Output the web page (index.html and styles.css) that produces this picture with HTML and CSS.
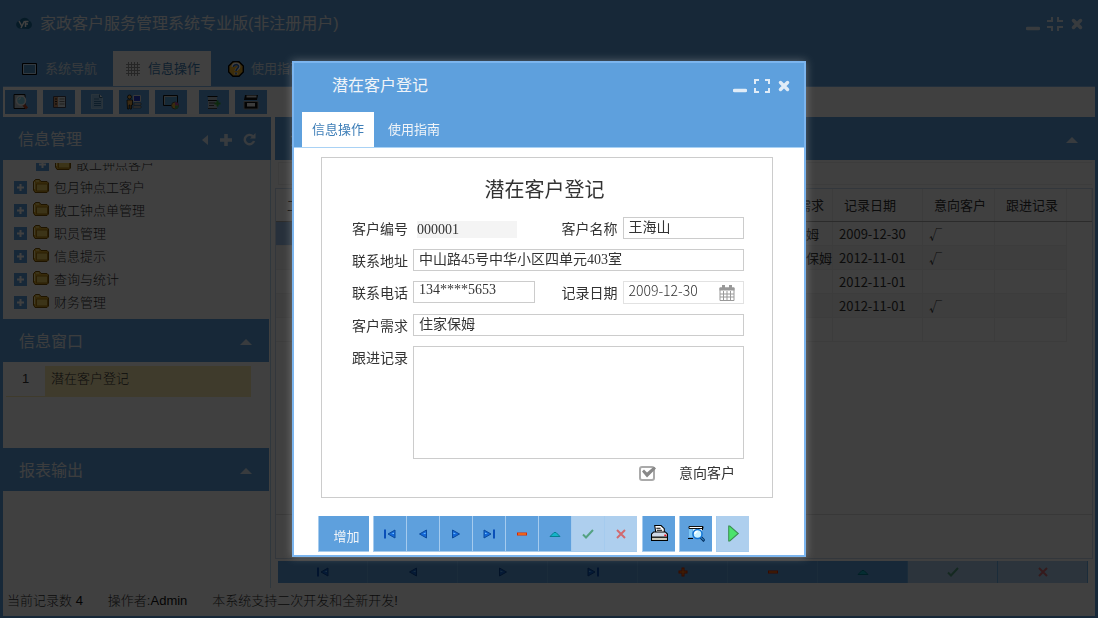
FILE: index.html
```html
<!DOCTYPE html>
<html lang="zh-CN">
  <head>
    <meta charset="utf-8">
    <title>家政客户服务管理系统专业版</title>
    <link rel="stylesheet" href="styles.css">
  </head>
  <body>
    <svg class="sprite" aria-hidden="true">
      <symbol id="i-first" viewBox="0 0 12 10"><path d="M1 .5v9" stroke="#0a4fb8" stroke-width="2"/><path d="M11 1v8L4 5z" fill="#1468d8" stroke="#0a4a9c"/><path d="M10 3.500L7.500 5H10z" fill="#6fc0ff"/></symbol>
      <symbol id="i-prev" viewBox="0 0 12 10"><path d="M9.500 1v8L2.500 5z" fill="#1468d8" stroke="#0a4a9c"/><path d="M8.500 3.500L6 5h2.500z" fill="#6fc0ff"/></symbol>
      <symbol id="i-next" viewBox="0 0 12 10"><path d="M2.500 1v8L9.500 5z" fill="#1468d8" stroke="#0a4a9c"/><path d="M3.500 3.500L6 5H3.500z" fill="#6fc0ff"/></symbol>
      <symbol id="i-last" viewBox="0 0 12 10"><path d="M11 .5v9" stroke="#0a4fb8" stroke-width="2"/><path d="M1 1v8L8 5z" fill="#1468d8" stroke="#0a4a9c"/><path d="M2 3.500L4.500 5H2z" fill="#6fc0ff"/></symbol>
      <symbol id="i-plus" viewBox="0 0 12 10"><path d="M6 .5v9M1.500 5h9" stroke="#d42a00" stroke-width="3"/><path d="M6 1.500v7M2.500 5h7" stroke="#ff8a1c"/></symbol>
      <symbol id="i-minus" viewBox="0 0 12 10"><path d="M1 5h10" stroke="#dc2800" stroke-width="3"/><path d="M2 5h8" stroke="#ff9a2c"/></symbol>
      <symbol id="i-up" viewBox="0 0 12 10"><path d="M1 7.500L5 3.500h2l4 4z" fill="#14b4c8" stroke="#067f92"/></symbol>
      <symbol id="i-ok" viewBox="0 0 12 10"><path d="M1 5.500l3 3L11 1" fill="none" stroke="#2f8f55" stroke-width="2"/></symbol>
      <symbol id="i-no" viewBox="0 0 12 10"><path d="M2 1l8 8M10 1L2 9" fill="none" stroke="#e0403c" stroke-width="2"/></symbol>
      <symbol id="i-caret" viewBox="0 0 12 6"><path d="M6 0l6 6H0z" fill="currentColor"/></symbol>
      <symbol id="i-min" viewBox="0 0 14 14"><path d="M1.500 11.500h11" stroke="currentColor" stroke-width="3.500" stroke-linecap="round"/></symbol>
      <symbol id="i-close" viewBox="0 0 14 14"><path d="M3.500 3.500l7 7M10.500 3.500l-7 7" stroke="currentColor" stroke-width="3.500" stroke-linecap="round"/></symbol>
      <symbol id="i-expand" viewBox="0 0 16 14"><path d="M1 5V1h4M11 1h4v4M15 9v4h-4M5 13H1V9" fill="none" stroke="currentColor" stroke-width="2"/></symbol>
      <symbol id="i-shrink" viewBox="0 0 16 14"><path d="M5 0v4H0M11 0v4h5M16 10h-5v4M0 10h5v4" fill="none" stroke="currentColor" stroke-width="2"/></symbol>
      <symbol id="i-left" viewBox="0 0 7 12"><path d="M6 1v10L0 6z" fill="currentColor"/></symbol>
      <symbol id="i-add" viewBox="0 0 12 12"><path d="M6 0v12M0 6h12" stroke="currentColor" stroke-width="3.500"/></symbol>
      <symbol id="i-refresh" viewBox="0 0 13 13"><path d="M9.800 3.200A4.700 4.700 0 1 0 11 8" fill="none" stroke="currentColor" stroke-width="2.400"/><path d="M12.500 0v5.500H7z" fill="currentColor"/></symbol>
      <symbol id="i-folder" viewBox="0 0 16 14"><path d="M.5 11V2.500L2.500.5h4l1.500 2h6l1.500 1.500v8l-1.500 1.500H2z" fill="#d9a92a" stroke="#7a5200"/><path d="M3.500 5h11v7h-11z" fill="#f0d060" stroke="#a87a10"/><path d="M1.500 10V3M3 2h3" stroke="#fff0a0" fill="none"/></symbol>
      <symbol id="i-node" viewBox="0 0 13 13"><path d="M0 0h13v13H0z" fill="#5ea0dd"/><path d="M6.500 3v7M3 6.500h7" stroke="#fff" stroke-width="2"/></symbol>
      <symbol id="i-screen" viewBox="0 0 16 14"><path d="M.5 1.500h14v11H.5z" fill="#4f94c8" stroke="#000"/><path d="M1.500 2.500h12v9h-12z" fill="none" stroke="#cbe8ff"/></symbol>
      <symbol id="i-grid" viewBox="0 0 16 14"><path d="M3.500 0v14M6.500 0v14M9.500 0v14M12.500 0v14M1 2.500h14M1 5.500h14M1 8.500h14M1 11.500h14" stroke="#999" fill="none"/></symbol>
      <symbol id="i-help" viewBox="0 0 16 16"><path d="M5 .7h6L15.300 5v6L11 15.300H5L.7 11V5z" fill="#f3b32a" stroke="#000" stroke-width="1.400"/><path d="M5 6c0-4 6-4 6-.6C11 8 8 7.500 8 10M8 11.500v2" stroke="#fff" stroke-width="3" fill="none"/><path d="M5.500 6c0-3 5-3 5-.6C10.500 7.500 8 7.500 8 10M8 11.500v2" stroke="#2a62b0" stroke-width="1.600" fill="none"/></symbol>
      <symbol id="i-find" viewBox="0 0 16 16"><path d="M1 .5h11v14H1z" fill="#b8c4cc" stroke="#111"/><path d="M10 10l4 4.500" stroke="#b0452a" stroke-width="3"/><circle cx="8" cy="6.500" r="4.500" fill="#7fd0e8" stroke="#eee" stroke-width="1.500"/><path d="M6 6c0-1.500 1-2 2-2" stroke="#fff" fill="none"/></symbol>
      <symbol id="i-list" viewBox="0 0 16 16"><path d="M2.500 2.500h12v11h-12z" fill="#dfe6ec" stroke="#445"/><path d="M3 3h4v10H3z" fill="#c98f6a"/><path d="M4 5h2M4 7.500h2M4 10h2" stroke="#222"/><path d="M8.500 5h5M8.500 7.500h5M8.500 10h5" stroke="#777"/></symbol>
      <symbol id="i-doc" viewBox="0 0 16 16"><path d="M2.500.5h8l3 3v11h-11z" fill="#8fc0e6" stroke="#a9cfec"/><path d="M10.500.5v3h3" fill="#fff" stroke="#33678f"/><path d="M5 5h5M5 7.500h7M5 9.500h7M5 11.500h7" stroke="#3b78a8"/></symbol>
      <symbol id="i-user" viewBox="0 0 16 16"><path d="M7.500 1.500h7v6h-7z" fill="#2b3fd0" stroke="#ddd"/><path d="M8 9h7v2H8zM7 12h8v2H7z" fill="#ccc" stroke="#333" stroke-width=".5"/><circle cx="3.500" cy="3" r="2" fill="#e6a94c" stroke="#000" stroke-width=".7"/><path d="M1 6h5.500v5H5.500v4H4V11H3v4H1.500z" fill="#e6a94c" stroke="#000" stroke-width=".7"/></symbol>
      <symbol id="i-pc" viewBox="0 0 16 16"><path d="M.5 1.500h14v10H.5z" fill="#5aa5d8" stroke="#111"/><path d="M1.500 10.500v-8h12" stroke="#ccc" fill="none"/><circle cx="12" cy="11.500" r="3.500" fill="#e6b23a" stroke="#555"/><path d="M12 8a3.500 3.500 0 0 1 3.500 3.500H12z" fill="#c3489c"/><path d="M12 11.500v3.500a3.500 3.500 0 0 0 3.500-3.500z" fill="#4aa35a"/></symbol>
      <symbol id="i-export" viewBox="0 0 16 16"><path d="M2 3h9v11H2z" fill="#aebcc6"/><path d="M1.500 2.500h10M2 6.500h9" stroke="#111"/><path d="M3 9h6M3 11.500h5M2 14.500h9" stroke="#444"/><path d="M11.500 6.500v6M8.500 9.500h6" stroke="#36a83a" stroke-width="2"/></symbol>
      <symbol id="i-device" viewBox="0 0 16 16"><path d="M2 1h13l-1 5H1z" fill="#111"/><path d="M3.500 2.500h10" stroke="#ddd" stroke-width="2"/><path d="M1 7.500h14V15H1z" fill="#111" stroke="#999"/><path d="M4 9h8v3.500H4z" fill="#eee"/></symbol>
      <symbol id="i-print" viewBox="0 0 16 16"><path d="M4.500 7L3.500.5h6l3 3V7" fill="#fff" stroke="#000"/><path d="M5 3h4M5.500 5h5" stroke="#000"/><path d="M2.500 6.500h11l2 2v3H.5v-3z" fill="#cfd8e6" stroke="#000"/><path d="M.5 11.500h15v3H.5z" fill="#cfccbc" stroke="#000"/><path d="M12.500 9h2v1.500h-2z" fill="#f01020"/></symbol>
      <symbol id="i-preview" viewBox="0 0 17 17"><path d="M1 1.500h14v2H1z" fill="#fff" stroke="#111"/><path d="M1 4h3.500v8H1z" fill="#7cc6f4"/><path d="M5 4h9v8H5z" fill="#e8f6ff"/><path d="M14.500 2v3M0 13.500h5" stroke="#000"/><path d="M12.500 12l4 4" stroke="#062e5c" stroke-width="3"/><path d="M12.500 12l3.500 3.500" stroke="#3fa9f5"/><circle cx="9.500" cy="9" r="4.500" fill="#c8f0ff" stroke="#1173d4" stroke-width="1.500"/><path d="M7 9c0-1.500 1-2.500 2.500-2.500" stroke="#fff" stroke-width="1.500" fill="none"/></symbol>
      <symbol id="i-play" viewBox="0 0 12 16"><path d="M1.500 1v14h1L10.500 8 2.500 1z" fill="#4be36c" stroke="#3b8f52"/></symbol>
      <symbol id="i-calendar" viewBox="0 0 16 16"><path d="M1 3h14v12.500H1z" fill="#fff" stroke="#999"/><path d="M.5 2.500h15v3H.5z" fill="#999"/><path d="M4.500 0v4M11.500 0v4" stroke="#999" stroke-width="3"/><path d="M4.500 6v9M8 6v9M11.500 6v9M1 9h14M1 12h14" stroke="#999"/></symbol>
      <symbol id="i-logo" viewBox="0 0 16 14"><path d="M3 11.500C-1 10-1 4.500 4 3.500 6-.5 12 0 13 3.500c4 1.500 4 7.500-.5 8.500z" fill="#1a6c9c"/><path d="M3 4l2.500 4.500M8.500 4L5 11M9.500 10V4.500h3M9.500 7h2.500" stroke="#fff" stroke-width="1.500" fill="none"/></symbol>
    </svg>

    <div class="app">
      <header class="app-head">
        <div class="title-bar">
          <svg class="logo"><use href="#i-logo"/></svg>
          <h1>家政客户服务管理系统专业版(非注册用户)</h1>
          <div class="win-buttons">
            <button type="button" aria-label="最小化"><svg><use href="#i-min"/></svg></button>
            <button type="button" aria-label="还原"><svg class="wide"><use href="#i-shrink"/></svg></button>
            <button type="button" aria-label="关闭"><svg><use href="#i-close"/></svg></button>
          </div>
        </div>
        <nav class="tabs">
          <a href="#nav"><svg><use href="#i-screen"/></svg>系统导航</a>
          <a href="#info" class="active"><svg><use href="#i-grid"/></svg>信息操作</a>
          <a href="#guide"><svg><use href="#i-help"/></svg>使用指南</a>
        </nav>
      </header>

      <div class="toolbar">
        <button type="button" aria-label="查找"><svg><use href="#i-find"/></svg></button>
        <button type="button" aria-label="列表"><svg><use href="#i-list"/></svg></button>
        <button type="button" aria-label="文档"><svg><use href="#i-doc"/></svg></button>
        <button type="button" aria-label="用户" class="slim"><svg><use href="#i-user"/></svg></button>
        <button type="button" aria-label="显示"><svg><use href="#i-pc"/></svg></button>
        <button type="button" aria-label="导出" class="slim split"><svg><use href="#i-export"/></svg></button>
        <button type="button" aria-label="设备"><svg><use href="#i-device"/></svg></button>
      </div>

      <div class="main">
        <aside class="side">
          <section class="panel panel-tree">
            <div class="panel-head">
              <h2>信息管理</h2>
              <div class="panel-tools">
                <button type="button" aria-label="收起"><svg class="s-left"><use href="#i-left"/></svg></button>
                <button type="button" aria-label="添加"><svg class="s-add"><use href="#i-add"/></svg></button>
                <button type="button" aria-label="刷新"><svg class="s-refresh"><use href="#i-refresh"/></svg></button>
              </div>
            </div>
            <div class="tree-box">
              <ul class="tree">
                <li class="sub"><svg class="node"><use href="#i-node"/></svg><svg class="folder"><use href="#i-folder"/></svg>散工钟点客户</li>
                <li><svg class="node"><use href="#i-node"/></svg><svg class="folder"><use href="#i-folder"/></svg>包月钟点工客户</li>
                <li><svg class="node"><use href="#i-node"/></svg><svg class="folder"><use href="#i-folder"/></svg>散工钟点单管理</li>
                <li><svg class="node"><use href="#i-node"/></svg><svg class="folder"><use href="#i-folder"/></svg>职员管理</li>
                <li><svg class="node"><use href="#i-node"/></svg><svg class="folder"><use href="#i-folder"/></svg>信息提示</li>
                <li><svg class="node"><use href="#i-node"/></svg><svg class="folder"><use href="#i-folder"/></svg>查询与统计</li>
                <li><svg class="node"><use href="#i-node"/></svg><svg class="folder"><use href="#i-folder"/></svg>财务管理</li>
              </ul>
            </div>
          </section>
          <section class="panel panel-windows">
            <div class="panel-head narrow">
              <h2>信息窗口</h2>
              <button type="button" aria-label="折叠"><svg class="s-caret"><use href="#i-caret"/></svg></button>
            </div>
            <ol class="window-list">
              <li><span class="num">1</span><span class="name">潜在客户登记</span></li>
            </ol>
          </section>
          <section class="panel">
            <div class="panel-head narrow">
              <h2>报表输出</h2>
              <button type="button" aria-label="折叠"><svg class="s-caret"><use href="#i-caret"/></svg></button>
            </div>
          </section>
        </aside>

        <section class="content">
          <div class="panel-head">
            <h2>潜在客户登记</h2>
            <button type="button" aria-label="折叠"><svg class="s-caret"><use href="#i-caret"/></svg></button>
          </div>
          <div class="filter"></div>
          <div class="grid-box">
            <table>
              <colgroup>
                <col><col class="c-need"><col class="c-date"><col class="c-flag"><col class="c-flag"><col class="c-rest">
              </colgroup>
              <thead>
                <tr><th>工</th><th>客户需求</th><th>记录日期</th><th>意向客户</th><th>跟进记录</th><th></th></tr>
              </thead>
              <tbody>
                <tr class="current"><td></td><td>住家保姆</td><td class="date">2009-12-30</td><td>√</td><td></td><td></td></tr>
                <tr><td></td><td>不住家保姆</td><td class="date">2012-11-01</td><td>√</td><td></td><td></td></tr>
                <tr><td></td><td></td><td class="date">2012-11-01</td><td></td><td></td><td></td></tr>
                <tr><td></td><td></td><td class="date">2012-11-01</td><td>√</td><td></td><td></td></tr>
                <tr><td></td><td></td><td></td><td></td><td></td><td></td></tr>
              </tbody>
            </table>
            <div class="grid-foot"></div>
          </div>
          <div class="navigator">
            <button type="button" aria-label="首条"><svg><use href="#i-first"/></svg></button>
            <button type="button" aria-label="上一条"><svg><use href="#i-prev"/></svg></button>
            <button type="button" aria-label="下一条"><svg><use href="#i-next"/></svg></button>
            <button type="button" aria-label="末条"><svg><use href="#i-last"/></svg></button>
            <button type="button" aria-label="新增"><svg><use href="#i-plus"/></svg></button>
            <button type="button" aria-label="删除"><svg><use href="#i-minus"/></svg></button>
            <button type="button" aria-label="编辑"><svg><use href="#i-up"/></svg></button>
            <button type="button" aria-label="保存" disabled><svg><use href="#i-ok"/></svg></button>
            <button type="button" aria-label="取消" disabled><svg><use href="#i-no"/></svg></button>
          </div>
        </section>
      </div>

      <footer class="status">
        <span>当前记录数 <b>4</b></span>
        <span>操作者:<b>Admin</b></span>
        <span>本系统支持二次开发和全新开发!</span>
      </footer>
    </div>

    <div class="mask">
      <div class="dialog" role="dialog" aria-labelledby="dialog-title">
        <header class="dialog-head">
          <div class="dialog-title">
            <h2 id="dialog-title">潜在客户登记</h2>
            <div class="win-buttons">
              <button type="button" aria-label="最小化"><svg><use href="#i-min"/></svg></button>
              <button type="button" aria-label="最大化"><svg class="wide"><use href="#i-expand"/></svg></button>
              <button type="button" aria-label="关闭"><svg><use href="#i-close"/></svg></button>
            </div>
          </div>
          <nav class="dialog-tabs">
            <a href="#edit" class="active">信息操作</a>
            <a href="#help">使用指南</a>
          </nav>
        </header>

        <form class="dialog-body">
          <div class="sheet">
            <h3>潜在客户登记</h3>
            <div class="fields">
              <label for="no">客户编号</label>
              <input type="text" id="no" class="readonly" value="000001" readonly>
              <label for="name">客户名称</label>
              <input type="text" id="name" value="王海山">

              <label for="address">联系地址</label>
              <input type="text" id="address" class="full" value="中山路45号中华小区四单元403室">

              <label for="phone">联系电话</label>
              <input type="text" id="phone" value="134****5653">
              <label for="date">记录日期</label>
              <div class="date-field">
                <input type="text" id="date" value="2009-12-30">
                <button type="button" aria-label="选择日期"><svg><use href="#i-calendar"/></svg></button>
              </div>

              <label for="need">客户需求</label>
              <input type="text" id="need" class="full" value="住家保姆">

              <label for="notes">跟进记录</label>
              <textarea id="notes" class="full"></textarea>
            </div>
            <div class="check-row">
              <input type="checkbox" id="intent" checked>
              <label for="intent">意向客户</label>
            </div>
          </div>

          <div class="actions">
            <button type="button" class="add">增加</button>
            <div class="group">
              <button type="button" aria-label="首条"><svg><use href="#i-first"/></svg></button>
              <button type="button" aria-label="上一条"><svg><use href="#i-prev"/></svg></button>
              <button type="button" aria-label="下一条"><svg><use href="#i-next"/></svg></button>
              <button type="button" aria-label="末条"><svg><use href="#i-last"/></svg></button>
              <button type="button" aria-label="删除"><svg><use href="#i-minus"/></svg></button>
              <button type="button" aria-label="编辑"><svg><use href="#i-up"/></svg></button>
              <button type="button" aria-label="保存" disabled><svg><use href="#i-ok"/></svg></button>
              <button type="button" aria-label="取消" disabled><svg><use href="#i-no"/></svg></button>
            </div>
            <button type="button" aria-label="打印"><svg class="big"><use href="#i-print"/></svg></button>
            <button type="button" aria-label="预览"><svg class="big"><use href="#i-preview"/></svg></button>
            <button type="button" aria-label="运行" disabled><svg class="big"><use href="#i-play"/></svg></button>
          </div>
        </form>
      </div>
    </div>
  </body>
</html>
```
FILE: styles.css
```css
* {
  box-sizing: border-box;
}

body {
  margin: 0;
  font-family: "Liberation Sans", "Noto Sans CJK SC", sans-serif;
  font-size: 13px;
  line-height: 20px;
  color: #333;
}

h1, h2, h3, ul, ol {
  margin: 0;
  padding: 0;
  font-weight: normal;
  list-style: none;
}

h1, h2 {
  font-size: 16px;
  line-height: 24px;
  color: #f0f4f8;
}

button {
  display: flex;
  align-items: center;
  justify-content: center;
  padding: 0;
  border: 0;
  background: none;
  color: #e0ecf7;
  cursor: pointer;
}

a {
  color: inherit;
  text-decoration: none;
}

svg {
  display: block;
  flex: none;
}

.sprite {
  position: absolute;
  width: 0;
  height: 0;
}

/* main window */

.app {
  display: flex;
  flex-direction: column;
  min-height: 100vh;
  border: solid #5ea0dd;
  border-width: 0 3px 2px;
  background: #fff;
}

.app-head {
  background: #5ea0dd;
  border-bottom: 1px solid #86bdf0;
}

.title-bar {
  display: flex;
  align-items: center;
  gap: 8px;
  height: 51px;
  padding: 0 11px 3px 13px;
}

.title-bar h1 {
  flex: 1;
}

.logo {
  width: 16px;
  height: 14px;
}

.win-buttons {
  display: flex;
  gap: 7px;
}

.win-buttons svg {
  width: 14px;
  height: 14px;
}

.win-buttons .wide {
  width: 16px;
}

.tabs {
  display: flex;
  gap: 5px;
  padding-left: 7px;
  color: #d9e6f2;
}

.tabs a {
  display: flex;
  align-items: center;
  gap: 7px;
  height: 35px;
  padding: 0 11px 0 12px;
}

.tabs svg {
  width: 16px;
  height: 16px;
}

.tabs .active {
  background: #fff;
  color: #3f7fb8;
}

.toolbar {
  display: flex;
  gap: 6px;
  padding: 3px 2px;
}

.toolbar button {
  width: 32px;
  height: 24px;
  background: #5ea0dd;
}

.toolbar .slim {
  width: 30px;
}

.toolbar .split {
  margin-left: 6px;
}

.toolbar svg {
  width: 16px;
  height: 16px;
}

.main {
  display: flex;
  flex: 1;
  gap: 4px;
}

.side {
  display: flex;
  flex-direction: column;
  width: 268px;
  border-right: 1px solid #bcd9f2;
}

.panel-head {
  display: flex;
  align-items: center;
  justify-content: space-between;
  height: 43px;
  padding: 2px 15px 0;
  background: #5ea0dd;
}

.side .panel-head {
  margin-right: -1px;
}

.side .narrow {
  margin-right: 1px;
  padding: 3px 17px 0 16px;
}

.panel-tools {
  display: flex;
  gap: 11px;
}

.s-left {
  width: 7px;
  height: 12px;
}

.s-add {
  width: 12px;
  height: 12px;
}

.s-refresh {
  width: 13px;
  height: 13px;
}

.s-caret {
  width: 12px;
  height: 6px;
}

.panel-tree {
  height: 202px;
}

.panel-windows {
  height: 129px;
}

/* the tree stands scrolled down by half a row */
.tree-box {
  height: 156px;
  margin-top: 3px;
  overflow: hidden;
}

.tree {
  margin-top: -10px;
  font-weight: 300;
}

.tree li {
  display: flex;
  align-items: center;
  height: 23px;
  padding-left: 11px;
}

.tree .sub {
  padding-left: 33px;
}

.node {
  width: 13px;
  height: 13px;
  margin-right: 6px;
}

.folder {
  width: 16px;
  height: 14px;
  margin-right: 5px;
  margin-bottom: 4px;
}

.window-list {
  padding: 4px 19px 0 3px;
}

.window-list li {
  display: flex;
  height: 31px;
  line-height: 26px;
  font-weight: 300;
  border-bottom: 1px solid #fbe9b0;
}

.num {
  width: 39px;
  text-align: center;
}

.name {
  flex: 1;
  padding-left: 6px;
  background: #fbe9b0;
}

.content {
  display: flex;
  flex: 1;
  flex-direction: column;
  min-width: 0;
}

.content .panel-head {
  padding-right: 17px;
}

.filter {
  height: 23px;
  margin: 2px 3px;
  border: 1px solid #eee;
  border-right: 0;
}

.grid-box {
  display: flex;
  flex: 1;
  flex-direction: column;
  justify-content: space-between;
  margin: 1px 2px 0 0;
  border: 1px solid #c9dced;
}

.grid-foot {
  height: 44px;
  border-top: 1px solid #ddd;
}

table {
  width: 100%;
  table-layout: fixed;
  border-collapse: collapse;
  font-family: "Noto Sans CJK SC", sans-serif;
}

.c-need,
.c-flag {
  width: 72px;
}

.c-date {
  width: 90px;
}

.c-rest {
  width: 25px;
}

th {
  height: 32px;
  padding: 0 0 0 11px;
  border-right: 1px solid #eee;
  border-bottom: 1px solid #aaa;
  font-weight: normal;
  text-align: left;
  white-space: nowrap;
}

td {
  height: 24px;
  padding: 2px 0 0 6px;
  border: solid #eee;
  border-width: 0 1px 1px 0;
  line-height: 20px;
  white-space: nowrap;
}

tbody tr:nth-child(even) td {
  background: #f5f5f5;
}

tbody .current td:first-child {
  background: #9cc0ea;
}

tbody td:last-child,
tbody tr:nth-child(even) td:last-child {
  border: 0;
  background: #fff;
}

.navigator {
  display: flex;
  margin: 2px 7px 5px 3px;
}

.navigator button {
  flex: 1;
  height: 22px;
  background: #5ea0dd;
  border-right: 1px solid #6caee8;
}

.navigator button:disabled {
  background: #aecfee;
}

.navigator svg,
.group svg {
  width: 12px;
  height: 10px;
}

.status {
  display: flex;
  gap: 25px;
  height: 28px;
  padding: 3px 4px;
  font-weight: 300;
}

.status b {
  font-weight: normal;
  color: #111;
}

/* dialog */

.mask {
  position: fixed;
  inset: 0;
  display: flex;
  align-items: center;
  justify-content: center;
  background: rgba(0, 0, 0, 0.75);
}

.dialog {
  width: 514px;
  max-width: 100%;
  border: 2px solid #7cb5ee;
  background: #fff;
  box-shadow: 0 0 8px rgba(255, 255, 255, 0.3);
}

.dialog-head {
  background: #5ea0dd;
  border-bottom: 1px solid #a9d2f5;
}

.dialog-title {
  display: flex;
  align-items: center;
  justify-content: space-between;
  height: 49px;
  padding: 0 13px 4px 38px;
}

.dialog-tabs {
  display: flex;
  gap: 4px;
  padding-left: 8px;
  color: #f0f4f8;
}

.dialog-tabs a {
  padding: 0 10px;
  line-height: 35px;
}

.dialog-tabs .active {
  background: #fff;
  color: #3f7fb8;
}

.dialog-body {
  padding: 9px 31px 3px 27px;
}

.sheet {
  padding: 18px 28px 10px 29px;
  border: 1px solid #ccc;
}

.sheet h3 {
  margin: 0 6px 13px 0;
  font-size: 20px;
  line-height: 28px;
  text-align: center;
}

.fields {
  display: grid;
  grid-template-columns: 57px 1fr 78px 1fr;
  gap: 10px 5px;
  font-size: 14px;
}

.fields label {
  line-height: 24px;
  height: 22px;
  text-align: right;
  white-space: nowrap;
}

.fields input,
.fields textarea {
  width: 100%;
  min-width: 0;
  height: 22px;
  margin: 0;
  padding: 0 5px 5px;
  border: 1px solid #ccc;
  border-radius: 0;
  background: #fff;
  color: #333;
  font-family: "Liberation Serif", "Noto Sans CJK SC", serif;
  font-size: 14px;
  line-height: 15px;
  outline: none;
}

.fields .full {
  grid-column: 2 / -1;
}

.fields textarea {
  display: block;
  height: 113px;
  resize: none;
}

.fields .readonly {
  width: 100px;
  height: 17px;
  margin: 4px 0 0 4px;
  padding: 0;
  border: 0;
  background: #f4f4f4;
}

.date-field {
  display: flex;
  align-items: center;
  height: 23px;
  padding-right: 8px;
  border: 1px solid #e2e2e2;
}

.date-field input {
  height: 20px;
  border: 0;
  font-family: "Noto Sans CJK SC", sans-serif;
  font-weight: 300;
}

.date-field svg {
  width: 16px;
  height: 16px;
}

.check-row {
  display: flex;
  align-items: center;
  justify-content: flex-end;
  gap: 24px;
  height: 28px;
  padding-right: 9px;
  font-size: 14px;
}

.check-row input {
  position: relative;
  width: 16px;
  height: 15px;
  margin: 0;
  border: 2px solid #aaa;
  border-radius: 3px;
  appearance: none;
}

.check-row input:checked::after {
  content: "";
  position: absolute;
  left: 1px;
  top: -1px;
  width: 14px;
  height: 11px;
  background: #888;
  clip-path: polygon(0 5px, 2px 3px, 5px 6px, 12px 0, 14px 2px, 5px 11px);
}

.actions {
  display: flex;
  gap: 4px;
  margin-top: 18px;
  margin-left: -3px;
}

.actions button {
  width: 33px;
  height: 36px;
  border: solid #a5cbee;
  border-width: 0 0 1px 1px;
  background: #5ea0dd;
}

.actions button:disabled {
  background: #aecfee;
}

.actions .add {
  width: 51px;
  padding: 3px 0 0 5px;
  color: #f0f4f8;
  font-family: inherit;
  font-size: 13px;
}

.group {
  display: flex;
  padding-right: 1px;
}

.big {
  width: 17px;
  height: 17px;
}

:disabled svg {
  opacity: 0.7;
}

.actions :disabled .big {
  opacity: 1;
}
```
